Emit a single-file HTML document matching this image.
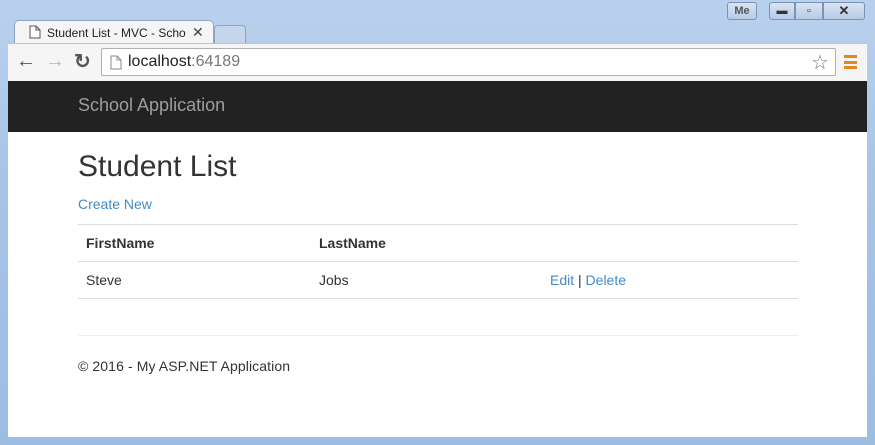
<!DOCTYPE html>
<html><head><style>
*{margin:0;padding:0;box-sizing:border-box}
body{width:875px;height:445px;overflow:hidden;background:linear-gradient(180deg,#b9d1ee 0%,#a8c4e6 40%,#9dbde3 100%);font-family:"Liberation Sans",sans-serif;position:relative}
.abs{position:absolute}
.tab{left:14px;top:20px;width:200px;height:24px;background:#f5f5f5;border:1px solid #8fa6c2;border-bottom:none;border-radius:5px 5px 0 0}
.tab2{left:214px;top:25px;width:32px;height:18px;background:#c5d6ea;border:1px solid #8fa6c2;border-bottom:none;border-radius:4px 4px 0 0}
.tool{left:8px;top:43px;width:859px;height:38px;background:#f5f5f5;border-top:1px solid #b7c6d8}
.url{left:101px;top:48px;width:735px;height:28px;background:#fff;border:1px solid #b0b0b0;border-radius:2px}
.nav{left:8px;top:81px;width:859px;height:51px;background:#222}
.page{left:8px;top:132px;width:859px;height:305px;background:#fff}
.ctl{top:2px;height:18px;border:1px solid #7b93b3;background:linear-gradient(#d8e5f4,#b7cbe6);font-size:11px;color:#333;text-align:center;line-height:16px}
a{color:#428bca;text-decoration:none}
</style></head><body>
<div class="abs ctl" style="left:727px;width:30px;border-radius:3px;font-weight:bold;color:#555">Me</div>
<div class="abs ctl" style="left:769px;width:26px;border-radius:3px 0 0 3px">▬</div>
<div class="abs ctl" style="left:795px;width:28px">▫</div>
<div class="abs ctl" style="left:823px;width:42px;border-radius:0 3px 3px 0;font-weight:bold;font-size:13px">✕</div>
<div class="abs tab2"></div>
<div class="abs tab"></div>
<svg class="abs" style="left:29px;top:25px" width="12" height="14"><path d="M1 1h6l4 4v8H1z M7 1v4h4" fill="#fff" stroke="#555"/></svg>
<div class="abs" style="left:47px;top:26px;font-size:12px;color:#222">Student List - MVC - Scho</div>
<div class="abs" style="left:192px;top:24px;font-size:14px;color:#444">✕</div>
<div class="abs tool"></div>
<div class="abs" style="left:16px;top:50px;font-size:20px;color:#555;font-weight:bold">←</div>
<div class="abs" style="left:45px;top:50px;font-size:20px;color:#bbb;font-weight:bold">→</div>
<div class="abs" style="left:74px;top:49px;font-size:20px;color:#555;font-weight:bold">↻</div>
<div class="abs url"></div>
<svg class="abs" style="left:110px;top:55px" width="12" height="15"><path d="M1 1h6l4 4v9H1z M7 1v4h4" fill="#fff" stroke="#888"/></svg>
<div class="abs" style="left:128px;top:53px;font-size:16px;color:#222">localhost<span style="color:#777">:64189</span></div>
<div class="abs" style="left:811px;top:50px;font-size:20px;color:#777">☆</div>
<div class="abs" style="left:844px;top:55px;width:13px;height:14px;border-top:3px solid #e08a1a;border-bottom:3px solid #e08a1a"><div style="margin-top:2.5px;height:3px;background:#e08a1a"></div></div>
<div class="abs nav"></div>
<div class="abs" style="left:78px;top:95px;font-size:18px;color:#9d9d9d">School Application</div>
<div class="abs page"></div>
<div class="abs" style="left:78px;top:150px;font-size:30px;color:#333">Student List</div>
<div class="abs" style="left:78px;top:196px;font-size:14px"><a>Create New</a></div>
<div class="abs" style="left:78px;top:224px;width:720px;border-top:1px solid #ddd"></div>
<div class="abs" style="left:78px;top:261px;width:720px;border-top:1px solid #ddd"></div>
<div class="abs" style="left:78px;top:298px;width:720px;border-top:1px solid #ddd"></div>
<div class="abs" style="left:78px;top:335px;width:720px;border-top:1px solid #eee"></div>
<div class="abs" style="left:86px;top:235px;font-size:14px;font-weight:bold;color:#333">FirstName</div>
<div class="abs" style="left:319px;top:235px;font-size:14px;font-weight:bold;color:#333">LastName</div>
<div class="abs" style="left:86px;top:272px;font-size:14px;color:#333">Steve</div>
<div class="abs" style="left:319px;top:272px;font-size:14px;color:#333">Jobs</div>
<div class="abs" style="left:550px;top:272px;font-size:14px;color:#333"><a>Edit</a> | <a>Delete</a></div>
<div class="abs" style="left:78px;top:358px;font-size:14px;color:#333;letter-spacing:0.1px">© 2016 - My ASP.NET Application</div>
</body></html>
